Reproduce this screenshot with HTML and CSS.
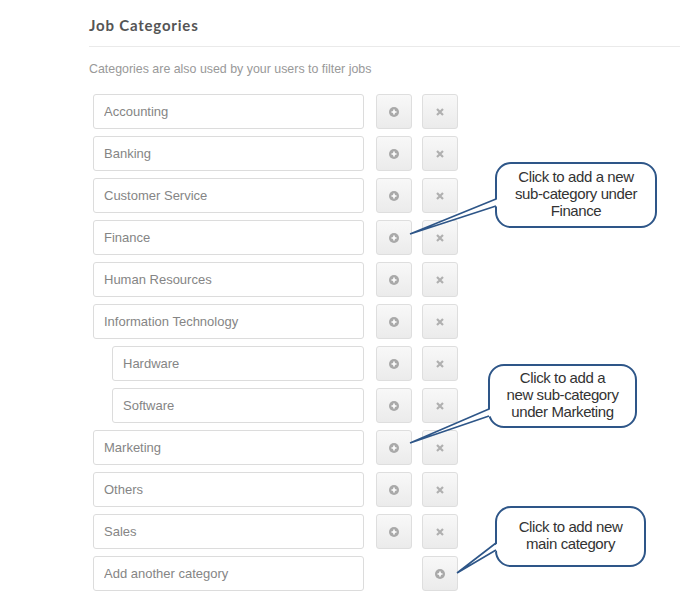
FILE: index.html
```html
<!DOCTYPE html>
<html lang="en">

<head>
    <meta charset="UTF-8">
    <meta name="viewport" content="width=device-width, initial-scale=1.0">
    <link rel="stylesheet" href="styles.css">
    <title>Job Categories</title>
</head>

<body>
    <div class="page">
        <h2 class="title">Job Categories</h2>
        <hr class="divider" />
        <p class="hint">Categories are also used by your users to filter jobs</p>

        <ul class="cat-list">
            <li class="cat-row">
                <input class="cat-input" type="text" value="Accounting" readonly>
                <button class="btn"><svg class="ico" viewBox="0 0 10 10"><circle cx="5" cy="5" r="5" fill="#a9a9a9"/><path d="M5 2.5v5M2.5 5h5" stroke="#fff" stroke-width="1.6"/></svg></button>
                <button class="btn"><svg class="ico" viewBox="0 0 10 10"><path d="M2 2l6 6M8 2l-6 6" stroke="#b0b0b0" stroke-width="2.2"/></svg></button>
            </li>
            <li class="cat-row">
                <input class="cat-input" type="text" value="Banking" readonly>
                <button class="btn"><svg class="ico" viewBox="0 0 10 10"><circle cx="5" cy="5" r="5" fill="#a9a9a9"/><path d="M5 2.5v5M2.5 5h5" stroke="#fff" stroke-width="1.6"/></svg></button>
                <button class="btn"><svg class="ico" viewBox="0 0 10 10"><path d="M2 2l6 6M8 2l-6 6" stroke="#b0b0b0" stroke-width="2.2"/></svg></button>
            </li>
            <li class="cat-row">
                <input class="cat-input" type="text" value="Customer Service" readonly>
                <button class="btn"><svg class="ico" viewBox="0 0 10 10"><circle cx="5" cy="5" r="5" fill="#a9a9a9"/><path d="M5 2.5v5M2.5 5h5" stroke="#fff" stroke-width="1.6"/></svg></button>
                <button class="btn"><svg class="ico" viewBox="0 0 10 10"><path d="M2 2l6 6M8 2l-6 6" stroke="#b0b0b0" stroke-width="2.2"/></svg></button>
            </li>
            <li class="cat-row">
                <input class="cat-input" type="text" value="Finance" readonly>
                <button class="btn"><svg class="ico" viewBox="0 0 10 10"><circle cx="5" cy="5" r="5" fill="#a9a9a9"/><path d="M5 2.5v5M2.5 5h5" stroke="#fff" stroke-width="1.6"/></svg></button>
                <button class="btn"><svg class="ico" viewBox="0 0 10 10"><path d="M2 2l6 6M8 2l-6 6" stroke="#b0b0b0" stroke-width="2.2"/></svg></button>
            </li>
            <li class="cat-row">
                <input class="cat-input" type="text" value="Human Resources" readonly>
                <button class="btn"><svg class="ico" viewBox="0 0 10 10"><circle cx="5" cy="5" r="5" fill="#a9a9a9"/><path d="M5 2.5v5M2.5 5h5" stroke="#fff" stroke-width="1.6"/></svg></button>
                <button class="btn"><svg class="ico" viewBox="0 0 10 10"><path d="M2 2l6 6M8 2l-6 6" stroke="#b0b0b0" stroke-width="2.2"/></svg></button>
            </li>
            <li class="cat-row">
                <input class="cat-input" type="text" value="Information Technology" readonly>
                <button class="btn"><svg class="ico" viewBox="0 0 10 10"><circle cx="5" cy="5" r="5" fill="#a9a9a9"/><path d="M5 2.5v5M2.5 5h5" stroke="#fff" stroke-width="1.6"/></svg></button>
                <button class="btn"><svg class="ico" viewBox="0 0 10 10"><path d="M2 2l6 6M8 2l-6 6" stroke="#b0b0b0" stroke-width="2.2"/></svg></button>
            </li>
            <li class="cat-row sub">
                <input class="cat-input" type="text" value="Hardware" readonly>
                <button class="btn"><svg class="ico" viewBox="0 0 10 10"><circle cx="5" cy="5" r="5" fill="#a9a9a9"/><path d="M5 2.5v5M2.5 5h5" stroke="#fff" stroke-width="1.6"/></svg></button>
                <button class="btn"><svg class="ico" viewBox="0 0 10 10"><path d="M2 2l6 6M8 2l-6 6" stroke="#b0b0b0" stroke-width="2.2"/></svg></button>
            </li>
            <li class="cat-row sub">
                <input class="cat-input" type="text" value="Software" readonly>
                <button class="btn"><svg class="ico" viewBox="0 0 10 10"><circle cx="5" cy="5" r="5" fill="#a9a9a9"/><path d="M5 2.5v5M2.5 5h5" stroke="#fff" stroke-width="1.6"/></svg></button>
                <button class="btn"><svg class="ico" viewBox="0 0 10 10"><path d="M2 2l6 6M8 2l-6 6" stroke="#b0b0b0" stroke-width="2.2"/></svg></button>
            </li>
            <li class="cat-row">
                <input class="cat-input" type="text" value="Marketing" readonly>
                <button class="btn"><svg class="ico" viewBox="0 0 10 10"><circle cx="5" cy="5" r="5" fill="#a9a9a9"/><path d="M5 2.5v5M2.5 5h5" stroke="#fff" stroke-width="1.6"/></svg></button>
                <button class="btn"><svg class="ico" viewBox="0 0 10 10"><path d="M2 2l6 6M8 2l-6 6" stroke="#b0b0b0" stroke-width="2.2"/></svg></button>
            </li>
            <li class="cat-row">
                <input class="cat-input" type="text" value="Others" readonly>
                <button class="btn"><svg class="ico" viewBox="0 0 10 10"><circle cx="5" cy="5" r="5" fill="#a9a9a9"/><path d="M5 2.5v5M2.5 5h5" stroke="#fff" stroke-width="1.6"/></svg></button>
                <button class="btn"><svg class="ico" viewBox="0 0 10 10"><path d="M2 2l6 6M8 2l-6 6" stroke="#b0b0b0" stroke-width="2.2"/></svg></button>
            </li>
            <li class="cat-row">
                <input class="cat-input" type="text" value="Sales" readonly>
                <button class="btn"><svg class="ico" viewBox="0 0 10 10"><circle cx="5" cy="5" r="5" fill="#a9a9a9"/><path d="M5 2.5v5M2.5 5h5" stroke="#fff" stroke-width="1.6"/></svg></button>
                <button class="btn"><svg class="ico" viewBox="0 0 10 10"><path d="M2 2l6 6M8 2l-6 6" stroke="#b0b0b0" stroke-width="2.2"/></svg></button>
            </li>
            <li class="cat-row new">
                <input class="cat-input" type="text" placeholder="Add another category">
                <span class="btn-spacer"></span>
                <button class="btn"><svg class="ico" viewBox="0 0 10 10"><circle cx="5" cy="5" r="5" fill="#a9a9a9"/><path d="M5 2.5v5M2.5 5h5" stroke="#fff" stroke-width="1.6"/></svg></button>
            </li>
        </ul>

        <!-- callout tails -->
        <svg class="tails" width="680" height="615" viewBox="0 0 680 615">
            <g fill="#fff" stroke="none">
                <polygon points="410,234 498,199 498,206" />
                <polygon points="410,443 491,409 491,416" />
                <polygon points="457,573 498,543 498,550" />
            </g>
            <g stroke="#2e5688" stroke-width="1.6" fill="none">
                <path d="M410 234L496 199M410 234L496 206" />
                <path d="M410 443L489 409M410 443L489 416" />
                <path d="M457 573L496 543M457 573L496 550" />
            </g>
        </svg>

        <div class="callout c-finance">Click to add a new<br>sub-category under<br>Finance</div>
        <div class="callout c-marketing">Click to add a<br>new sub-category<br>under Marketing</div>
        <div class="callout c-main">Click to add new<br>main category</div>
    </div>
</body>

</html>
```

FILE: styles.css
```css
body {
    margin: 0;
    padding: 0;
    background: #fff;
    font-family: 'Liberation Sans', Arial, sans-serif;
}

.page {
    position: relative;
    width: 680px;
    height: 615px;
    padding-left: 89px;
    box-sizing: border-box;
    overflow: hidden;
}

.title {
    margin: 0;
    padding-top: 16px;
    font-family: 'Lato', sans-serif;
    font-size: 15px;
    font-weight: 700;
    letter-spacing: 0.8px;
    line-height: 18px;
    color: #555;
}

.divider {
    margin: 12px 0 0 0;
    border: none;
    border-top: 1px solid #eaeaea;
}

.hint {
    margin: 15px 0 0 0;
    font-size: 12.4px;
    line-height: 15px;
    color: #999;
}

.cat-list {
    list-style: none;
    margin: 17px 0 0 0;
    padding: 0;
    display: flex;
    flex-direction: column;
    gap: 7px;
}

.cat-row {
    display: flex;
    align-items: center;
    margin-left: 4px;
}

.cat-row.sub {
    margin-left: 23px;
}

.cat-input {
    box-sizing: border-box;
    width: 271px;
    height: 35px;
    padding: 0 10px;
    border: 1px solid #dcdcdc;
    border-radius: 3px;
    font-family: 'Liberation Sans', Arial, sans-serif;
    font-size: 13px;
    color: #858585;
    background: #fff;
    outline: none;
}

.cat-input::placeholder {
    color: #858585;
}

.sub .cat-input {
    width: 252px;
}

.btn {
    box-sizing: border-box;
    width: 36px;
    height: 35px;
    margin-left: 10px;
    padding: 0;
    border: 1px solid #dedede;
    border-radius: 3px;
    background: linear-gradient(#f8f8f8, #ebebeb);
    display: flex;
    align-items: center;
    justify-content: center;
    cursor: pointer;
}

.cat-input + .btn {
    margin-left: 12px;
}

.btn-spacer {
    width: 36px;
    margin-left: 12px;
}

.ico {
    width: 10px;
    height: 10px;
}

.tails {
    position: absolute;
    left: 0;
    top: 0;
    z-index: 2;
    pointer-events: none;
}

.callout {
    position: absolute;
    box-sizing: border-box;
    padding-bottom: 3px;
    border: 2px solid #2e5688;
    border-radius: 16px;
    background: #fff;
    display: flex;
    align-items: center;
    justify-content: center;
    text-align: center;
    font-family: 'Liberation Sans', Arial, sans-serif;
    font-size: 15px;
    letter-spacing: -0.4px;
    line-height: 17px;
    color: #333;
    z-index: 1;
}

.c-finance {
    left: 495px;
    top: 162px;
    width: 162px;
    height: 66px;
}

.c-marketing {
    left: 488px;
    top: 364px;
    width: 149px;
    height: 64px;
}

.c-main {
    left: 495px;
    top: 506px;
    width: 151px;
    height: 61px;
}
```
